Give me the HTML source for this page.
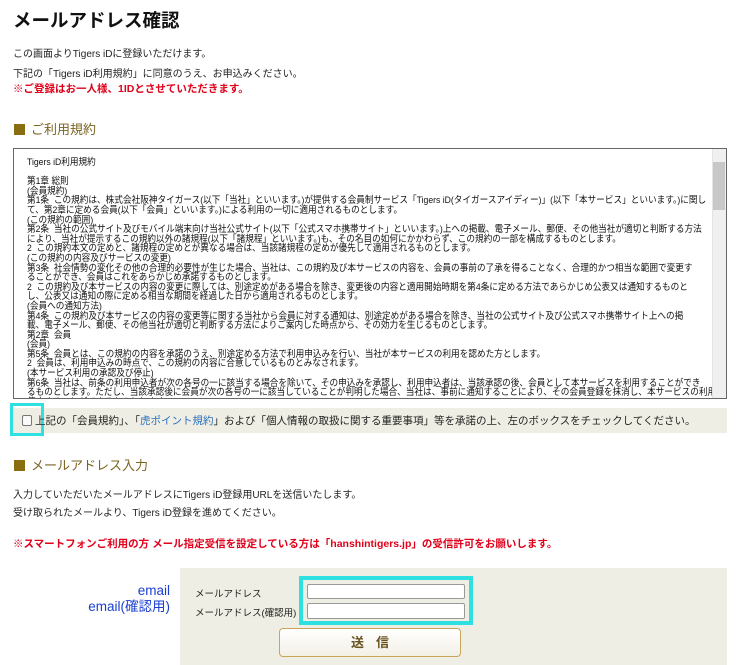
<!DOCTYPE html>
<html><head><meta charset="utf-8">
<style>
*{margin:0;padding:0;box-sizing:border-box}
body{width:740px;height:665px;overflow:hidden;background:#fff;font-family:"Liberation Sans","Noto Sans CJK JP",sans-serif;color:#222;position:relative}
.a{position:absolute;white-space:nowrap}
h1{position:absolute;left:13px;top:7px;font-size:18.5px;font-weight:bold;color:#111}
.p{font-size:10px;color:#222}
.red{color:#e0001a;font-weight:bold;font-size:10.5px}
.h2{font-size:13px;color:#7a6420}
.h2 span{display:inline-block;width:11px;height:11px;background:#8a6d10;margin-right:6px;vertical-align:-1px}
#box{position:absolute;left:13px;top:148px;width:714px;height:251px;border:1px solid #666;overflow:hidden;background:#fff}
#box .t{position:absolute;left:13px;top:9px;font-size:9.6px;line-height:9.6px;color:#111;white-space:pre;transform:scaleX(0.9);transform-origin:0 0}
#sb{position:absolute;right:0;top:0;width:14px;height:100%;background:#f0f0f0;border-left:1px solid #e4e4e4}
#th{position:absolute;right:1px;top:13px;width:12px;height:48px;background:#c8c8c8}
</style></head><body>
<h1>メールアドレス確認</h1>
<div class="a p" style="left:13px;top:45px">この画面よりTigers iDに登録いただけます。</div>
<div class="a p" style="left:13px;top:65px">下記の「Tigers iD利用規約」に同意のうえ、お申込みください。</div>
<div class="a red" style="left:13px;top:81px">※ご登録はお一人様、1IDとさせていただきます。</div>
<div class="a h2" style="left:14px;top:119px"><span></span>ご利用規約</div>
<div id="box"><div class="t">Tigers iD利用規約

第1章 総則
(会員規約)
第1条  この規約は、株式会社阪神タイガース(以下「当社」といいます。)が提供する会員制サービス「Tigers iD(タイガースアイディー)」(以下「本サービス」といいます。)に関し
て、第2章に定める会員(以下「会員」といいます。)による利用の一切に適用されるものとします。
(この規約の範囲)
第2条  当社の公式サイト及びモバイル端末向け当社公式サイト(以下「公式スマホ携帯サイト」といいます。)上への掲載、電子メール、郵便、その他当社が適切と判断する方法
により、当社が提示するこの規約以外の諸規程(以下「諸規程」といいます。)も、その名目の如何にかかわらず、この規約の一部を構成するものとします。
2  この規約本文の定めと、諸規程の定めとが異なる場合は、当該諸規程の定めが優先して適用されるものとします。
(この規約の内容及びサービスの変更)
第3条  社会情勢の変化その他の合理的必要性が生じた場合、当社は、この規約及び本サービスの内容を、会員の事前の了承を得ることなく、合理的かつ相当な範囲で変更す
ることができ、会員はこれをあらかじめ承諾するものとします。
2  この規約及び本サービスの内容の変更に際しては、別途定めがある場合を除き、変更後の内容と適用開始時期を第4条に定める方法であらかじめ公表又は通知するものと
し、公表又は通知の際に定める相当な期間を経過した日から適用されるものとします。
(会員への通知方法)
第4条  この規約及び本サービスの内容の変更等に関する当社から会員に対する通知は、別途定めがある場合を除き、当社の公式サイト及び公式スマホ携帯サイト上への掲
載、電子メール、郵便、その他当社が適切と判断する方法によりご案内した時点から、その効力を生じるものとします。
第2章  会員
(会員)
第5条  会員とは、この規約の内容を承諾のうえ、別途定める方法で利用申込みを行い、当社が本サービスの利用を認めた方とします。
2  会員は、利用申込みの時点で、この規約の内容に合意しているものとみなされます。
(本サービス利用の承認及び停止)
第6条  当社は、前条の利用申込者が次の各号の一に該当する場合を除いて、その申込みを承認し、利用申込者は、当該承認の後、会員として本サービスを利用することができ
るものとします。ただし、当該承認後に会員が次の各号の一に該当していることが判明した場合、当社は、事前に通知することにより、その会員登録を抹消し、本サービスの利用を
停止することができるものとします。
(1)申込みの内容に虚偽の記載、誤記、又は記入漏れがあった場合</div>
<div id="sb"><div id="th"></div></div></div>
<div class="a" style="left:13px;top:408px;width:714px;height:25px;background:#eeeee4"></div>
<div class="a" style="left:10px;top:403px;width:34px;height:33px;border:3px solid #2ee0e0"></div>
<div class="a" style="left:22px;top:415px;width:10px;height:11px;border:1px solid #777;border-radius:2px;background:#fafafa"></div>
<div class="a" style="left:35px;top:413px;font-size:10.5px;color:#222">上記の「会員規約」、「<span style="color:#2a6fc0">虎ポイント規約</span>」および「個人情報の取扱に関する重要事項」等を承諾の上、左のボックスをチェックしてください。</div>
<div class="a h2" style="left:14px;top:455px"><span></span>メールアドレス入力</div>
<div class="a p" style="left:13px;top:486px">入力していただいたメールアドレスにTigers iD登録用URLを送信いたします。</div>
<div class="a p" style="left:13px;top:504px">受け取られたメールより、Tigers iD登録を進めてください。</div>
<div class="a red" style="left:13px;top:536px">※スマートフォンご利用の方 メール指定受信を設定している方は「hanshintigers.jp」の受信許可をお願いします。</div>
<div class="a" style="left:180px;top:568px;width:547px;height:97px;background:#eeeee4"></div>
<div class="a" style="left:60px;top:583px;width:110px;text-align:right;font-size:13.5px;line-height:16px;color:#1a3fd0">email<br>email(確認用)</div>
<div class="a" style="left:195px;top:586px;font-size:9.5px;color:#222">メールアドレス</div>
<div class="a" style="left:195px;top:605px;font-size:9.5px;color:#222">メールアドレス(確認用)</div>
<div class="a" style="left:299px;top:576px;width:174px;height:49px;border:4px solid #2ee0e0"></div>
<div class="a" style="left:307px;top:584px;width:158px;height:15px;border:1px solid #999;border-radius:2px;background:#fff"></div>
<div class="a" style="left:307px;top:603px;width:158px;height:16px;border:1px solid #999;border-radius:2px;background:#fff"></div>
<div class="a" style="left:279px;top:628px;width:182px;height:29px;border:1px solid #c9a55a;border-radius:4px;background:linear-gradient(#fff,#f3f0e6);text-align:center;line-height:27px;font-size:13px;font-weight:bold;color:#6a5320;letter-spacing:12px;padding-left:12px">送信</div>
</body></html>
